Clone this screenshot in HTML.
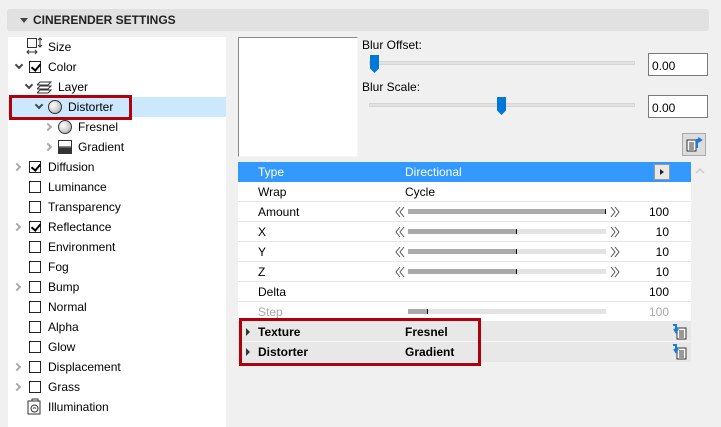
<!DOCTYPE html>
<html><head><style>
*{margin:0;padding:0;box-sizing:border-box}
body{width:721px;height:427px;background:#f0f0f0;font-family:"Liberation Sans",sans-serif;font-size:12px;color:#000;position:relative;overflow:hidden}
.abs{position:absolute}
.hdr{left:7px;top:9px;width:702px;height:22px;background:#e1e1e1;border-radius:3px}
.hdr span{position:absolute;left:26px;top:4px;font-weight:bold;font-size:12px;color:#222}
.hdr i{position:absolute;left:13px;top:9px;border-left:4px solid transparent;border-right:4px solid transparent;border-top:5px solid #444}
.left{left:8px;top:37px;width:218px;height:390px;background:#fff}
.t{position:absolute;font-size:12px;white-space:nowrap}
.cb{position:absolute;width:12px;height:12px;border:1px solid #222;background:#fff}
.cb.c::after{content:"";position:absolute;left:3px;top:0px;width:4px;height:7px;border-right:2px solid #000;border-bottom:2px solid #000;transform:rotate(40deg)}
.ex{position:absolute;width:6px;height:6px;border-right:2px solid #aaa;border-bottom:2px solid #aaa;transform:rotate(-45deg)}
.ex.o{transform:rotate(45deg);border-color:#444}
.row{position:absolute;left:238px;width:453px;height:20px;background:#fff;border-bottom:1px solid #e6e6e6}
.lab{position:absolute;left:20px;top:3px}
.val{position:absolute;left:167px;top:3px}
.num{position:absolute;right:22px;top:3px}
.trk{position:absolute;left:170px;top:7px;width:198px;height:5px;background:#e3e3e3}
.trk b{position:absolute;left:0;top:0;height:5px;background:#aaa;border-right:1px solid #000}
.arr{position:absolute;top:4px}
.sl{position:absolute;height:4px;background:#e2e2e2;border:1px solid #d6d6d6}
.th{position:absolute;width:9px;height:18px;background:#0078d7;clip-path:polygon(0 0,100% 0,100% 75%,50% 100%,0 75%)}
.inp{position:absolute;width:60px;height:23px;background:#fff;border:1px solid #7a7a7a;padding:5px 0 0 3px}
</style></head><body>
<div class="abs hdr"><i></i><span>CINERENDER SETTINGS</span></div>
<div class="abs left"></div>
<div class="abs" style="left:8px;top:97px;width:218px;height:20px;background:#cce8ff"></div>
<div class="abs" style="left:9px;top:95px;width:123px;height:25px;border:3px solid #b0000c"></div>

<!-- Size icon -->
<svg class="abs" style="left:26px;top:37px" width="18" height="18"><rect x="1.5" y="1.5" width="9" height="9" fill="none" stroke="#333"/><path d="M14 1v9M12 3l2-2 2 2M12 8l2 2 2-2M1 15h10M3 13l-2 2 2 2M9 13l2 2-2 2" fill="none" stroke="#333"/></svg>
<div class="t" style="left:48px;top:40px">Size</div>

<div class="ex o" style="left:16px;top:62px"></div><div class="cb c" style="left:29px;top:61px"></div><div class="t" style="left:48px;top:60px">Color</div>
<div class="ex o" style="left:26px;top:82px"></div>
<svg class="abs" style="left:37px;top:80px" width="16" height="14"><path d="M3 2h11l-3 3H0zM3 6h11l-3 3H0zM3 10h11l-3 3H0z" fill="none" stroke="#333"/></svg>
<div class="t" style="left:58px;top:80px">Layer</div>
<div class="ex o" style="left:36px;top:102px"></div>
<div class="abs" style="left:48px;top:100px;width:14px;height:14px;border-radius:50%;border:1px solid #333;background:radial-gradient(circle at 35% 35%,#fff,#ccc 60%,#888)"></div>
<div class="t" style="left:68px;top:100px">Distorter</div>
<div class="ex" style="left:45px;top:124px"></div>
<div class="abs" style="left:58px;top:120px;width:14px;height:14px;border-radius:50%;border:1px solid #333;background:radial-gradient(circle at 35% 35%,#fff,#ccc 60%,#888)"></div>
<div class="t" style="left:78px;top:120px">Fresnel</div>
<div class="ex" style="left:45px;top:144px"></div>
<div class="abs" style="left:58px;top:140px;width:14px;height:14px;border:1px solid #333;background:linear-gradient(#fff 40%,#888 40%,#888 55%,#333 55%)"></div>
<div class="t" style="left:78px;top:140px">Gradient</div>

<div class="ex" style="left:14px;top:164px"></div><div class="cb c" style="left:29px;top:161px"></div><div class="t" style="left:48px;top:160px">Diffusion</div>
<div class="cb" style="left:29px;top:181px"></div><div class="t" style="left:48px;top:180px">Luminance</div>
<div class="cb" style="left:29px;top:201px"></div><div class="t" style="left:48px;top:200px">Transparency</div>
<div class="ex" style="left:14px;top:224px"></div><div class="cb c" style="left:29px;top:221px"></div><div class="t" style="left:48px;top:220px">Reflectance</div>
<div class="cb" style="left:29px;top:241px"></div><div class="t" style="left:48px;top:240px">Environment</div>
<div class="cb" style="left:29px;top:261px"></div><div class="t" style="left:48px;top:260px">Fog</div>
<div class="ex" style="left:14px;top:284px"></div><div class="cb" style="left:29px;top:281px"></div><div class="t" style="left:48px;top:280px">Bump</div>
<div class="cb" style="left:29px;top:301px"></div><div class="t" style="left:48px;top:300px">Normal</div>
<div class="cb" style="left:29px;top:321px"></div><div class="t" style="left:48px;top:320px">Alpha</div>
<div class="cb" style="left:29px;top:341px"></div><div class="t" style="left:48px;top:340px">Glow</div>
<div class="ex" style="left:14px;top:364px"></div><div class="cb" style="left:29px;top:361px"></div><div class="t" style="left:48px;top:360px">Displacement</div>
<div class="ex" style="left:14px;top:384px"></div><div class="cb" style="left:29px;top:381px"></div><div class="t" style="left:48px;top:380px">Grass</div>
<svg class="abs" style="left:27px;top:398px" width="16" height="18"><path d="M3 3h10v13H1V3zM5 3V1h6v2" fill="none" stroke="#333"/><circle cx="7.5" cy="10.5" r="3.5" fill="none" stroke="#333"/><path d="M6 10.5q1.5-1.5 3 0" fill="none" stroke="#333"/></svg>
<div class="t" style="left:48px;top:400px">Illumination</div>

<!-- right top -->
<div class="abs" style="left:238px;top:37px;width:120px;height:120px;background:#fff;border:1px solid #888;border-right-color:#f6f6f6;border-bottom-color:#f6f6f6"></div>
<div class="t" style="left:362px;top:38px">Blur Offset:</div>
<div class="sl" style="left:369px;top:61px;width:266px"></div>
<div class="th" style="left:370px;top:55px"></div>
<div class="inp" style="left:648px;top:53px">0.00</div>
<div class="t" style="left:362px;top:80px">Blur Scale:</div>
<div class="sl" style="left:369px;top:103px;width:266px"></div>
<div class="th" style="left:497px;top:97px"></div>
<div class="inp" style="left:648px;top:95px">0.00</div>
<div class="abs" style="left:682px;top:133px;width:24px;height:23px;background:#ddd;border:1px solid #aaa"></div>
<svg class="abs" style="left:686px;top:136px" width="17" height="17"><rect x="1" y="4" width="9" height="11" fill="#fff" stroke="#333"/><path d="M3 7h5M3 9h5M3 11h5M3 13h5" stroke="#333"/><path d="M11 12V4h3M12 2l3 2-3 2" fill="none" stroke="#1a7be0" stroke-width="2"/></svg>

<!-- table -->
<div class="row" style="top:162px;background:#3399ff;color:#fff;border:none"><span class="lab">Type</span><span class="val">Directional</span>
<div style="position:absolute;left:416px;top:2px;width:16px;height:16px;background:#e8e8e8;border:1px solid #999"><div style="position:absolute;left:5px;top:4px;border-top:3px solid transparent;border-bottom:3px solid transparent;border-left:4px solid #222"></div></div></div>
<svg class="abs" style="left:695px;top:168px" width="10" height="6"><path d="M1 5l4-4 4 4" fill="none" stroke="#ccc" stroke-width="1.5"/></svg>
<div class="row" style="top:182px"><span class="lab">Wrap</span><span class="val">Cycle</span></div>
<div class="row" style="top:202px"><span class="lab">Amount</span><svg class="arr" style="left:157px" width="10" height="12"><path d="M5 1L1 6l4 5M9 1L5 6l4 5" fill="none" stroke="#555"/></svg><div class="trk"><b style="width:198px"></b></div><svg class="arr" style="left:372px" width="10" height="12"><path d="M1 1l4 5-4 5M5 1l4 5-4 5" fill="none" stroke="#555"/></svg><span class="num">100</span></div>
<div class="row" style="top:222px"><span class="lab">X</span><svg class="arr" style="left:157px" width="10" height="12"><path d="M5 1L1 6l4 5M9 1L5 6l4 5" fill="none" stroke="#555"/></svg><div class="trk"><b style="width:109px"></b></div><svg class="arr" style="left:372px" width="10" height="12"><path d="M1 1l4 5-4 5M5 1l4 5-4 5" fill="none" stroke="#555"/></svg><span class="num">10</span></div>
<div class="row" style="top:242px"><span class="lab">Y</span><svg class="arr" style="left:157px" width="10" height="12"><path d="M5 1L1 6l4 5M9 1L5 6l4 5" fill="none" stroke="#555"/></svg><div class="trk"><b style="width:109px"></b></div><svg class="arr" style="left:372px" width="10" height="12"><path d="M1 1l4 5-4 5M5 1l4 5-4 5" fill="none" stroke="#555"/></svg><span class="num">10</span></div>
<div class="row" style="top:262px"><span class="lab">Z</span><svg class="arr" style="left:157px" width="10" height="12"><path d="M5 1L1 6l4 5M9 1L5 6l4 5" fill="none" stroke="#555"/></svg><div class="trk"><b style="width:109px"></b></div><svg class="arr" style="left:372px" width="10" height="12"><path d="M1 1l4 5-4 5M5 1l4 5-4 5" fill="none" stroke="#555"/></svg><span class="num">10</span></div>
<div class="row" style="top:282px"><span class="lab">Delta</span><span class="num">100</span></div>
<div class="row" style="top:302px;color:#aaa"><span class="lab">Step</span><div class="trk"><b style="width:20px"></b></div><span class="num">100</span></div>
<div class="row" style="top:322px;background:#e8e8e8;font-weight:bold;border-bottom:1px solid #f4f4f4"><span style="position:absolute;left:8px;top:6px;border-top:4px solid transparent;border-bottom:4px solid transparent;border-left:4px solid #333"></span><span class="lab">Texture</span><span class="val">Fresnel</span></div>
<div class="row" style="top:342px;background:#e8e8e8;font-weight:bold"><span style="position:absolute;left:8px;top:6px;border-top:4px solid transparent;border-bottom:4px solid transparent;border-left:4px solid #333"></span><span class="lab">Distorter</span><span class="val">Gradient</span></div>
<svg class="abs" style="left:672px;top:324px" width="16" height="17"><rect x="5" y="4" width="9" height="11" fill="#fff" stroke="#333"/><path d="M7 7h5M7 9h5M7 11h5M7 13h5" stroke="#333"/><path d="M1 1h3v6M2 5l2 3 2-3" fill="none" stroke="#1a7be0" stroke-width="2"/></svg>
<svg class="abs" style="left:672px;top:344px" width="16" height="17"><rect x="5" y="4" width="9" height="11" fill="#fff" stroke="#333"/><path d="M7 7h5M7 9h5M7 11h5M7 13h5" stroke="#333"/><path d="M1 1h3v6M2 5l2 3 2-3" fill="none" stroke="#1a7be0" stroke-width="2"/></svg>
<div class="abs" style="left:239px;top:318px;width:242px;height:48px;border:3px solid #b0000c"></div>
</body></html>
